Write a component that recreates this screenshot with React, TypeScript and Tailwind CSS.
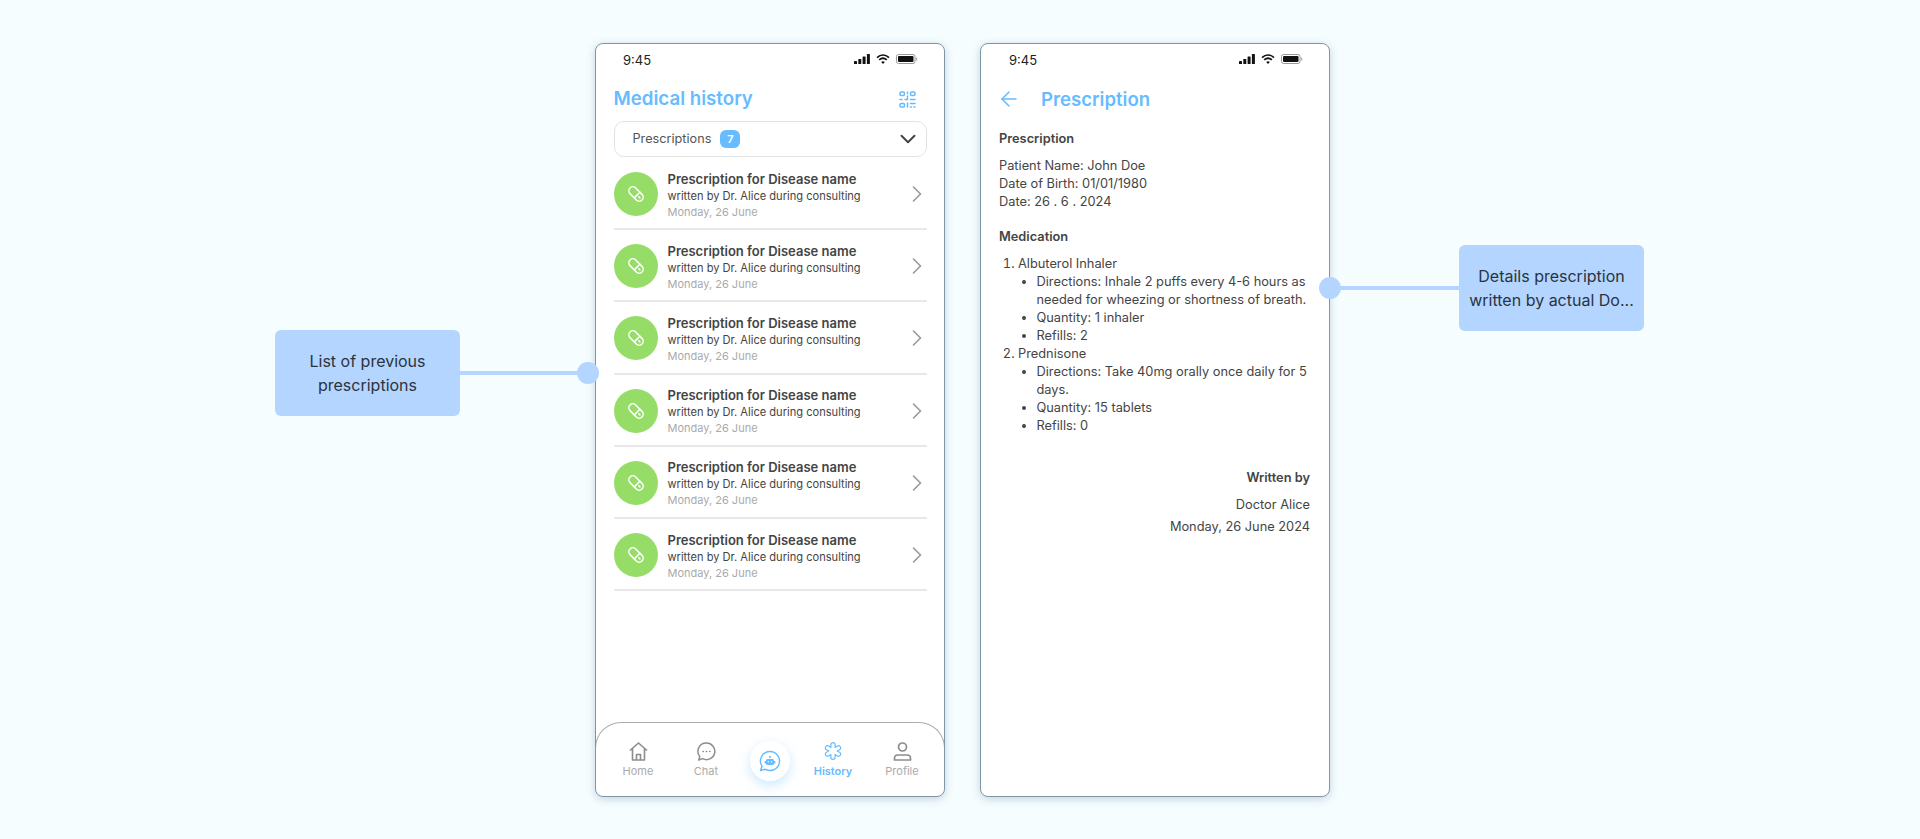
import { ChevronDown, ChevronRight, ArrowLeft } from "lucide-react";

const body = "[font-family:Inter,'Noto_Sans',sans-serif]";

function StatusBar({ timeLeft }: { timeLeft: string }) {
  return (
    <div className="flex items-center justify-between h-[28px] pt-[2px] pr-[26px]">
      <span className={`${timeLeft} mt-[2px] text-[13px] leading-none text-[#222]`}>9:45</span>
      <div className="flex items-center gap-[6px]">
        <svg width="16" height="10" viewBox="0 0 16 10" fill="#111">
          <rect x="0" y="7" width="3" height="3" rx="0.6" />
          <rect x="4.3" y="5" width="3" height="5" rx="0.6" />
          <rect x="8.6" y="2.5" width="3" height="7.5" rx="0.6" />
          <rect x="12.9" y="0" width="3" height="10" rx="0.6" />
        </svg>
        <svg width="14" height="10" viewBox="0 0 14 10" fill="none" stroke="#111" strokeWidth="1.7">
          <path d="M1 3.6C4.6.3 9.4.3 13 3.6" />
          <path d="M3.2 5.9c2.3-2 5.3-2 7.6 0" />
          <path d="M7 10 5.2 7.9c1.1-.8 2.5-.8 3.6 0Z" fill="#111" stroke="none" />
        </svg>
        <svg width="22" height="10" viewBox="0 0 22 10" fill="none">
          <rect x="0.5" y="0.5" width="18.5" height="9" rx="2" stroke="#999" />
          <rect x="2" y="2" width="15.5" height="6" rx="1" fill="#111" />
          <rect x="20" y="3.5" width="1.2" height="3" rx="0.6" fill="#aaa" />
        </svg>
      </div>
    </div>
  );
}

function QrIcon() {
  return (
    <svg width="17" height="17" viewBox="0 0 17 17" fill="none" stroke="#66bcff" strokeWidth="1.5" strokeLinecap="round">
      <rect x="1" y="1" width="4.5" height="3.5" rx="1.2" />
      <rect x="11.5" y="1" width="4.5" height="3.5" rx="1.2" />
      <rect x="1" y="12.5" width="4.5" height="3.5" rx="1.2" />
      <path d="M8.500 1v1.500M8.500 5v3.500H6M1 8.500h2M11.500 8.500h4.500M16 8.500v.1M8.500 12v4M11.500 12.500h4.500M11.500 16h1M15 16h1" />
    </svg>
  );
}

function PillIcon() {
  return (
    <svg width="18" height="18" viewBox="0 0 18 18" fill="none" stroke="#fff" strokeWidth="1.5" strokeLinecap="round">
      <g transform="rotate(45 9 9)">
        <rect x="0.500" y="5" width="17" height="8" rx="4" />
        <path d="M10.500 5v8" />
        <path d="M13 9h1.500" />
      </g>
    </svg>
  );
}

// six rounded arms round the centre, as one outline
function starPath() {
  const c = 9;
  const w = 2.1;
  const tip = 6.3;
  const inner = w / Math.sin(Math.PI / 6);
  let d = "";
  for (let k = 0; k < 6; k++) {
    const a = -Math.PI / 2 + (k * Math.PI) / 3;
    const [dx, dy] = [Math.cos(a), Math.sin(a)];
    const [nx, ny] = [-dy, dx];
    const b = a - Math.PI / 6;
    const sx = c + inner * Math.cos(b);
    const sy = c + inner * Math.sin(b);
    const p1 = `${(c + tip * dx - w * nx).toFixed(2)} ${(c + tip * dy - w * ny).toFixed(2)}`;
    const p2 = `${(c + tip * dx + w * nx).toFixed(2)} ${(c + tip * dy + w * ny).toFixed(2)}`;
    d += `${k === 0 ? "M" : "L"}${sx.toFixed(2)} ${sy.toFixed(2)}L${p1}A${w} ${w} 0 0 1 ${p2}`;
  }
  return d + "Z";
}

function Row() {
  return (
    <div className="flex items-center h-[72.2px] pt-[2px] border-b-2 border-[#e8e8e8]">
      <div className="flex items-center justify-center w-[44px] h-[44px] rounded-full bg-[#96dd68] shrink-0">
        <PillIcon />
      </div>
      <div className="ml-[10px] mt-[1px] flex flex-col grow">
        <span className="text-[13px] leading-[18px] font-semibold text-[#444]">Prescription for Disease name</span>
        <span className="text-[11.100px] leading-[17px] text-[#444]">written by Dr. Alice during consulting</span>
        <span className="text-[11px] leading-[15px] text-[#aaa]">Monday, 26 June</span>
      </div>
      <ChevronRight className="w-[28px] h-[28px] text-[#999] mr-[-4px] shrink-0" strokeWidth={1.4} />
    </div>
  );
}

function NavItem({ label, width, active, children }: { label: string; width: string; active?: boolean; children: React.ReactNode }) {
  return (
    <div className={`${width} flex flex-col items-center`}>
      <div className="h-[20px] flex items-center justify-center">{children}</div>
      <span className={active ? "mt-[3px] text-[11px] leading-[14px] font-semibold text-[#66bcff]" : "mt-[3px] text-[11px] leading-[14px] text-[#aaa]"}>
        {label}
      </span>
    </div>
  );
}

function TabBar() {
  return (
    <div className="mt-auto h-[74px] shrink-0 rounded-t-[26px] border-t border-x border-[#a9adb0] flex items-start pt-[18px] pl-[12px] -mx-px">
      <NavItem label="Home" width="w-[60px]">
        <svg width="19" height="19" viewBox="0 0 19 19" fill="none" stroke="#8d8d8d" strokeWidth="1.6" strokeLinejoin="round">
          <path d="M1 8.500 9.500 1 18 8.500M3.500 6.500V18h12V6.500" />
          <path d="M7.500 18v-5.500h4V18" />
        </svg>
      </NavItem>
      <NavItem label="Chat" width="w-[76px]">
        <svg width="19" height="19" viewBox="0 0 19 19" fill="none" stroke="#8d8d8d" strokeWidth="1.5" strokeLinejoin="round">
          <path d="M9.500 1a8.300 8.300 0 1 1-3.900 15.600L1.800 18l1-3.500A8.300 8.300 0 0 1 9.500 1Z" />
          <path d="M6 9.500h.4M9.300 9.500h.4M12.600 9.500h.4" strokeLinecap="round" />
        </svg>
      </NavItem>
      <div className="w-[52px] flex justify-center">
        <div className="w-[40px] h-[40px] rounded-full bg-white shadow-[0_4px_12px_rgba(102,188,255,0.35)] flex items-center justify-center">
          <svg width="22" height="22" viewBox="0 0 22 22" fill="none">
            <path d="M11 1.500a9.500 9.500 0 1 1-4.600 17.800L1.500 20.500l1.600-4.200A9.500 9.500 0 0 1 11 1.500Z" stroke="#66bcff" strokeWidth="1.400" strokeLinejoin="round" />
            <rect x="7" y="9" width="8" height="6" rx="1.500" fill="#66bcff" />
            <rect x="5.500" y="11" width="11" height="2.500" rx="1" fill="#66bcff" />
            <circle cx="11" cy="7" r="1.100" fill="#66bcff" />
            <circle cx="9.300" cy="11.800" r="0.700" fill="#fff" />
            <circle cx="12.700" cy="11.800" r="0.700" fill="#fff" />
          </svg>
        </div>
      </div>
      <NavItem label="History" width="w-[74px]" active>
        <svg width="18" height="18" viewBox="0 0 18 18" fill="none" stroke="#66bcff" strokeWidth="1.200" strokeLinejoin="round">
          <path d={starPath()} />
        </svg>
      </NavItem>
      <NavItem label="Profile" width="w-[64px]">
        <svg width="19" height="19" viewBox="0 0 19 19" fill="none" stroke="#8d8d8d" strokeWidth="1.700">
          <circle cx="9.500" cy="5" r="4" />
          <path d="M1.500 18v-1.800c0-2 1.500-3.200 3.500-3.200h9c2 0 3.500 1.200 3.500 3.200V18Z" strokeLinejoin="round" />
        </svg>
      </NavItem>
    </div>
  );
}

function Phone({ children }: { children: React.ReactNode }) {
  return (
    <div className="w-[350px] h-[754px] shrink-0 flex flex-col bg-white rounded-[8px] border border-[#7f96a8] shadow-[0_2px_8px_rgba(60,90,120,0.25)] overflow-hidden">
      {children}
    </div>
  );
}

function HistoryPhone() {
  return (
    <Phone>
      <StatusBar timeLeft="ml-[27px]" />
      <div className="px-[17.500px] flex flex-col grow">
        <div className="flex items-center justify-between h-[22px] mt-[16px]">
          <h1 className="text-[18.700px] leading-none font-semibold text-[#66bcff]">Medical history</h1>
          <div className="mr-[11px]">
            <QrIcon />
          </div>
        </div>
        <div className="mt-[11px] h-[36px] border border-[#e2e2e2] rounded-[10px] flex items-center pl-[18px] pr-[5px] shrink-0">
          <span className="text-[12.700px] text-[#555]">Prescriptions</span>
          <span className="ml-[9px] w-[20px] h-[18px] rounded-[6px] bg-[#66bcff] text-white text-[11px] font-semibold flex items-center justify-center">7</span>
          <ChevronDown className="ml-auto w-[26px] h-[26px] text-[#444]" strokeWidth={1.800} />
        </div>
        <div className="mt-[1px] flex flex-col">
          {[1, 2, 3, 4, 5, 6].map((n) => (
            <Row key={n} />
          ))}
        </div>
      </div>
      <TabBar />
    </Phone>
  );
}

function DetailPhone() {
  return (
    <Phone>
      <StatusBar timeLeft="ml-[28px]" />
      <div className="px-[18px] pr-[19px] text-[12.800px] leading-[18px] text-[#444]">
        <div className="flex items-center h-[22px] mt-[16px]">
          <ArrowLeft className="w-[24px] h-[24px] text-[#66bcff] ml-[-2px]" strokeWidth={1.5} />
          <h1 className="ml-[20px] text-[18.600px] leading-none font-semibold text-[#66bcff]">Prescription</h1>
        </div>
        <h2 className="mt-[20px] font-semibold">Prescription</h2>
        <p className="mt-[9px]">
          Patient Name: John Doe
          <br />
          Date of Birth: 01/01/1980
          <br />
          Date: 26 . 6 . 2024
        </p>
        <h2 className="mt-[17px] font-semibold">Medication</h2>
        <ol className="mt-[9px] list-decimal pl-[19px]">
          <li>
            Albuterol Inhaler
            <ul className="list-disc pl-[18.500px]">
              <li className="whitespace-nowrap">
                Directions: Inhale 2 puffs every 4-6 hours as
                <br />
                needed for wheezing or shortness of breath.
              </li>
              <li>Quantity: 1 inhaler</li>
              <li>Refills: 2</li>
            </ul>
          </li>
          <li>
            Prednisone
            <ul className="list-disc pl-[18.500px]">
              <li className="whitespace-nowrap">
                Directions: Take 40mg orally once daily for 5
                <br />
                days.
              </li>
              <li>Quantity: 15 tablets</li>
              <li>Refills: 0</li>
            </ul>
          </li>
        </ol>
        <div className="mt-[34px] flex flex-col items-end">
          <span className="font-semibold">Written by</span>
          <span className="mt-[9px]">Doctor Alice</span>
          <span className="mt-[4px]">Monday, 26 June 2024</span>
        </div>
      </div>
    </Phone>
  );
}

export default function App() {
  return (
    <div className={`${body} w-full h-[839px] bg-[#f5fdff] flex items-start pl-[275px] pt-[43px] overflow-hidden`}>
      <div className="flex items-center mt-[287px] shrink-0 relative z-10 mr-[-4px]">
        <div className="w-[185px] h-[86px] rounded-[6px] bg-[#b3d5ff] flex items-center justify-center text-center text-[16px] leading-[24px] text-[#2b3340]">
          List of previous
          <br />
          prescriptions
        </div>
        <div className="w-[118px] h-[4px] bg-[#b3d5ff]" />
        <div className="w-[22px] h-[22px] rounded-full bg-[#b3d5ff] ml-[-1px]" />
      </div>
      <HistoryPhone />
      <div className="w-[35px] shrink-0" />
      <DetailPhone />
      <div className="flex items-center mt-[202px] shrink-0 relative z-10 ml-[-11px]">
        <div className="w-[22px] h-[22px] rounded-full bg-[#b3d5ff]" />
        <div className="w-[118px] h-[4px] bg-[#b3d5ff]" />
        <div className="w-[185px] h-[86px] rounded-[6px] bg-[#b3d5ff] flex items-center justify-center text-center text-[16px] leading-[24px] text-[#2b3340]">
          Details prescription
          <br />
          written by actual Do...
        </div>
      </div>
    </div>
  );
}
